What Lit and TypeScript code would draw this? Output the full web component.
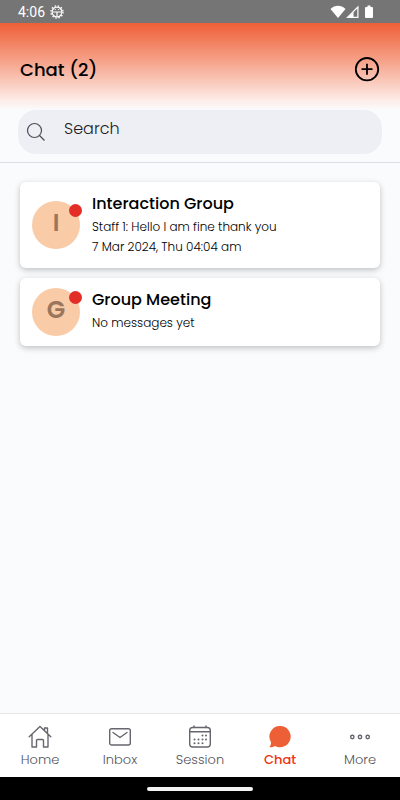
import { LitElement, html, css, svg } from "lit";
import { customElement, state } from "lit/decorators.js";
import { classMap } from "lit/directives/class-map.js";

interface Chat {
  name: string;
  lines: string[];
}

const chats: Chat[] = [
  { name: "Interaction Group", lines: ["Staff 1: Hello I am fine thank you", "7 Mar 2024, Thu 04:04 am"] },
  { name: "Group Meeting", lines: ["No messages yet"] },
];

const tabs = [
  {
    label: "Home",
    icon: svg`<path d="M1.200 11.700 12 1.500l10.800 10.200M4 9.500V22h4.500v-6.500q0-1 1-1h5q1 0 1 1V22H20V9.500M16.500 5.200V3h3v5"/>`,
  },
  {
    label: "Inbox",
    icon: svg`<rect x="1.700" y="3.700" width="20.600" height="16.300" rx="2"/><path d="m5 7.500 7 5 7-5"/>`,
  },
  {
    label: "Session",
    icon: svg`<rect x="1.700" y="2.500" width="20.600" height="19.500" rx="3"/><path d="M2 6.800h20M6 1v1.500M18 1v1.500"/>
      <g class="solid"><circle cx="14.500" cy="10.500" r="1"/><circle cx="18" cy="10.500" r="1"/>
      <circle cx="6.500" cy="14.500" r="1"/><circle cx="10.500" cy="14.500" r="1"/><circle cx="14.500" cy="14.500" r="1"/><circle cx="18" cy="14.500" r="1"/>
      <circle cx="6.500" cy="18.300" r="1"/><circle cx="10.500" cy="18.300" r="1"/><circle cx="14.500" cy="18.300" r="1"/></g>`,
  },
  {
    label: "Chat",
    icon: svg`<path class="bubble" d="M12.200 1a10.600 10.600 0 1 1-5.200 19.900c-1.400.9-3.100 1.400-4.700 1.300-.7 0-.8-.6-.4-1 .8-1.100 1.300-2.700 1-4.200A10.600 10.600 0 0 1 12.200 1Z"/>`,
  },
  {
    label: "More",
    icon: svg`<circle cx="4.300" cy="12" r="1.700"/><circle cx="12" cy="12" r="1.700"/><circle cx="19.700" cy="12" r="1.700"/>`,
  },
];

@customElement("app-root")
export class AppRoot extends LitElement {
  @state() private active = "Chat";

  static styles = css`
    :host {
      display: flex;
      flex-direction: column;
      min-height: 100vh;
      background: #fafbfd;
      color: #000;
      font-family: Poppins, Inter, "Open Sans", sans-serif;
    }
    * { box-sizing: border-box; }
    svg { display: block; fill: none; stroke: currentColor; }
    button { border: 0; padding: 0; background: none; color: inherit; font: inherit; cursor: pointer; }
    h1, h2, p { margin: 0; }

    .status {
      display: flex;
      align-items: center;
      justify-content: space-between;
      height: 23px;
      padding: 1px 27px 0 18px;
      background: #757575;
      color: #fff;
      font: 14px/22px Roboto, sans-serif;
    }
    .status-group { display: flex; align-items: center; gap: 5px; }
    .signals { display: flex; align-items: center; }
    .battery { margin-left: 6px; }
    .white { fill: #fff; stroke: none; }

    .header {
      display: flex;
      align-items: center;
      justify-content: space-between;
      height: 87px;
      padding: 6px 20px 0;
      background: linear-gradient(#ee5f36, #f6a48c 45%, #fdeee9 90%, #fafbfd);
    }
    h1 { font-size: 18px; line-height: 28px; font-weight: 500; }

    .search-area { padding: 0 18px 8px; border-bottom: 1px solid #dedfe2; }
    .search {
      display: flex;
      align-items: center;
      gap: 18px;
      height: 44px;
      padding: 0 8px;
      border-radius: 18px;
      background: #eeeff5;
      color: #4c4d54;
    }
    .search input {
      flex: 1;
      min-width: 0;
      height: 44px;
      padding: 0 0 8px;
      border: 0;
      outline: 0;
      background: none;
      color: #1d1d20;
      font: 300 16px/24px Poppins, Inter, sans-serif;
    }
    .search input::placeholder { color: #1d1d20; opacity: 1; }

    .list { flex: 1; display: flex; flex-direction: column; gap: 10px; padding: 19px 20px; }
    .card {
      display: flex;
      align-items: center;
      gap: 12px;
      width: 100%;
      padding: 10px 12px;
      border-radius: 6px;
      background: #fff;
      box-shadow: 0 2px 6px rgba(0, 0, 0, 0.24);
      text-align: left;
    }
    .avatar {
      position: relative;
      flex: none;
      width: 48px;
      height: 48px;
      border-radius: 50%;
      background: #f9cba7;
      color: #9b765d;
      font-size: 24px;
      line-height: 44px;
      font-weight: 600;
      text-align: center;
    }
    .dot {
      position: absolute;
      top: 3px;
      right: -2px;
      width: 13px;
      height: 13px;
      border-radius: 50%;
      background: #e32d27;
    }
    .body { flex: 1; min-width: 0; align-self: flex-start; padding-bottom: 1px; }
    h2 { margin-bottom: 1px; font-size: 16px; line-height: 24px; font-weight: 500; }
    .body p { font-size: 12px; line-height: 20px; font-weight: 300; }

    .tabs { display: flex; height: 64px; border-top: 1px solid #e6e7e9; background: #fff; }
    .tab {
      flex: 1;
      display: flex;
      flex-direction: column;
      align-items: center;
      padding-top: 11px;
      color: #55555d;
      font-size: 13px;
      line-height: 22px;
      font-weight: 300;
    }
    .tab svg { color: #66666e; }
    .tab.active { color: #ee3312; font-weight: 500; }
    .solid { fill: currentColor; stroke: none; }
    .bubble { fill: #ed5f36; stroke: none; }
    .gesture { display: flex; align-items: center; justify-content: center; height: 23px; background: #000; }
    .handle { width: 106px; height: 4px; border-radius: 2px; background: #f4f4f4; }
  `;

  render() {
    return html`
      <div class="status">
        <div class="status-group">
          <span>4:06</span>
          <svg width="14" height="14" viewBox="0 0 14 14">
            <circle cx="7" cy="7" r="4.900" stroke-width="1.200" />
            <circle cx="7" cy="7" r="6.100" stroke-width="1.300" stroke-dasharray="1.500 1.694" />
            <path d="M2.500 7h9M7 7v4.500M4.800 4.500h1M8.200 4.500h1" stroke-width="1.200" />
          </svg>
        </div>
        <div class="signals">
          <svg width="16" height="14" viewBox="0 0 16 14"><path class="white" d="M.5 4C5-.2 11-.2 15.500 4L8 13Z" /></svg>
          <svg width="13" height="14" viewBox="0 0 13 14">
            <path d="M1.500 12.400 11.900 2v10.400Z" stroke-width="1.200" /><path class="white" d="M2 12.400 7.500 7v5.400Z" />
          </svg>
          <svg class="battery" width="8" height="14" viewBox="0 0 8 14"><path class="white" d="M2.500.5h3V2H7q1 0 1 1v9q0 1-1 1H1q-1 0-1-1V3q0-1 1-1h1.500Z" /></svg>
        </div>
      </div>
      <header class="header">
        <h1>Chat (${chats.length})</h1>
        <button aria-label="New chat">
          <svg width="26" height="26" viewBox="0 0 26 26" stroke-width="1.800"><circle cx="13" cy="12.200" r="11.200" /><path d="M13 6.700v11M7.500 12.200h11" /></svg>
        </button>
      </header>
      <div class="search-area">
        <label class="search">
          <svg width="20" height="20" viewBox="0 0 20 20" stroke-width="1.200"><circle cx="8.500" cy="8.500" r="7" /><path d="m13.500 13.500 5 5" /></svg>
          <input type="text" placeholder="Search" aria-label="Search" />
        </label>
      </div>
      <main class="list">
        ${chats.map(
          (chat) => html`
            <button class="card">
              <div class="avatar">${chat.name[0]}<span class="dot"></span></div>
              <div class="body">
                <h2>${chat.name}</h2>
                ${chat.lines.map((line) => html`<p>${line}</p>`)}
              </div>
            </button>
          `
        )}
      </main>
      <nav class="tabs">
        ${tabs.map(
          (tab) => html`
            <button class=${classMap({ tab: true, active: tab.label === this.active })} @click=${() => (this.active = tab.label)}>
              <svg width="24" height="24" viewBox="0 0 24 24" stroke-width="1.400" stroke-linecap="round" stroke-linejoin="round">${tab.icon}</svg>
              <span>${tab.label}</span>
            </button>
          `
        )}
      </nav>
      <div class="gesture"><div class="handle"></div></div>
    `;
  }
}
